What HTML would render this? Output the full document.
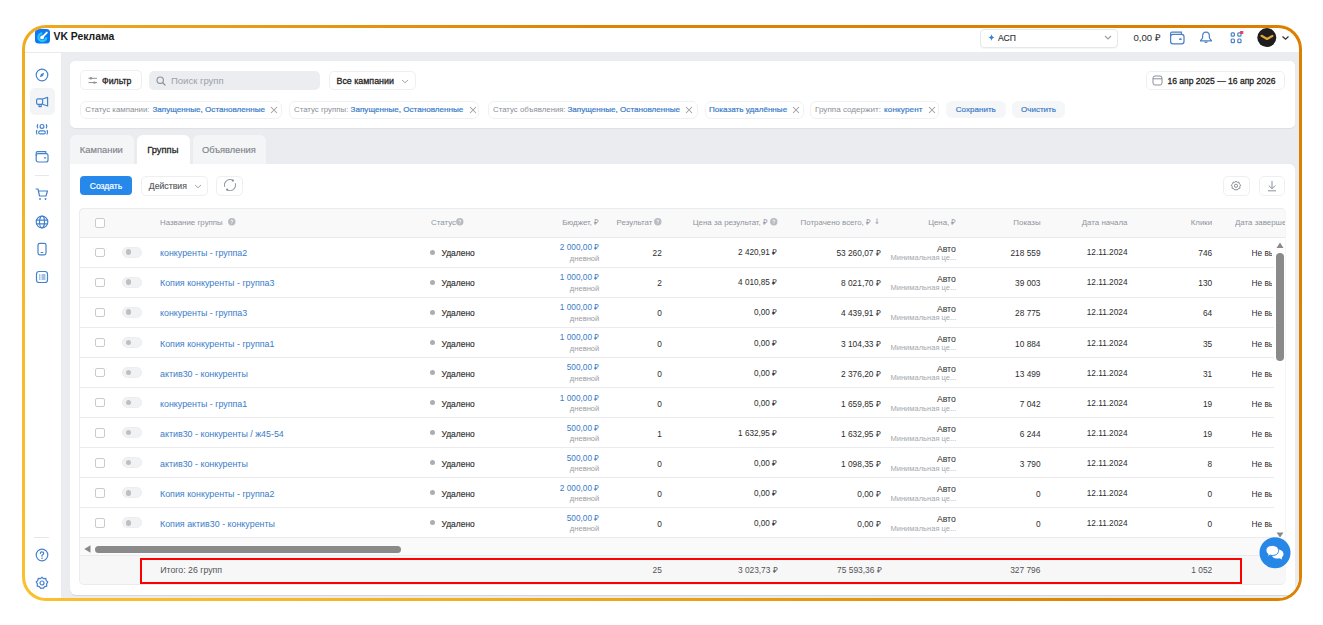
<!DOCTYPE html>
<html><head><meta charset="utf-8"><title>VK Реклама</title>
<style>
*{box-sizing:border-box;margin:0;padding:0}
html,body{width:1323px;height:625px;overflow:hidden;background:#fff}
body{position:relative;font-family:"Liberation Sans",sans-serif;color:#2c2d2e}
.a{position:absolute}
.t{position:absolute;white-space:nowrap}
svg{display:block}
</style></head><body>
<div class="a" style="left:22px;top:25px;width:1280px;height:576px;border-radius:24px;background:linear-gradient(48deg,#fbc02e 0%,#f7b928 15%,#eda51b 33%,#de8400 61%,#dc7e00 100%)"></div>
<div class="a" id="win" style="left:0;top:0;width:1323px;height:625px;clip-path:inset(28px 24px 27px 25px round 21px);background:#fff">
<div class="a" style="left:61px;top:52px;width:1238px;height:546px;background:#ebecef"></div>
<div class="a" style="left:25px;top:52px;width:36px;height:1px;background:#e6e9ee"></div>
<svg class="a" style="left:35px;top:29px;" width="15" height="15" viewBox="0 0 15 15"><rect x="0" y="0" width="15" height="14.5" rx="3.5" fill="#0b78f5"/><path d="M7.3 4.3 A3.9 3.9 0 1 0 11.2 8.2" fill="none" stroke="#2ac6f0" stroke-width="2.3"/><path d="M7.2 8.3 L11.8 3.6" stroke="#fff" stroke-width="1.9" stroke-linecap="round"/><circle cx="7.1" cy="8.4" r="1.9" fill="#fff"/></svg>
<div class="t" style="left:53.5px;top:30.50px;font-size:10.4px;font-weight:700;color:#1a1a1a;line-height:12px;">VK Реклама</div>
<div class="a" style="left:980px;top:29px;width:138px;height:18.5px;border:1px solid #e7e8ea;border-radius:4px;background:#fff;box-shadow:0 1px 1px rgba(0,0,0,.04)"></div>
<svg class="a" style="left:988px;top:34px;" width="7" height="7" viewBox="0 0 7 7"><path d="M3.5 0 Q3.9 3.1 7 3.5 Q3.9 3.9 3.5 7 Q3.1 3.9 0 3.5 Q3.1 3.1 3.5 0Z" fill="#2d81e0"/></svg>
<div class="t" style="left:998px;top:31.60px;font-size:8.6px;font-weight:400;color:#333;line-height:12px;-webkit-text-stroke:0.14px #333;">АСП</div>
<svg class="a" style="left:1104px;top:35px;" width="8" height="5" viewBox="0 0 8 5"><path d="M1 1 L4 4 L7 1" fill="none" stroke="#9a9fa5" stroke-width="1.2"/></svg>
<div class="t" style="left:1133.5px;top:32.00px;font-size:9.6px;font-weight:400;color:#2c2d2e;line-height:12px;">0,00 ₽</div>
<svg class="a" style="left:1169px;top:31px;" width="17" height="14" viewBox="0 0 17 14"><rect x="1.6" y="3.3" width="13.4" height="9.6" rx="2.3" fill="none" stroke="#4a80c4" stroke-width="1.25"/><path d="M1.6 5 V2.6 Q1.6 1.2 3 1.2 H12.4 V3.3" fill="none" stroke="#4a80c4" stroke-width="1.2"/><rect x="10.2" y="7.3" width="2.4" height="1.6" rx=".5" fill="#4a80c4"/></svg>
<svg class="a" style="left:1199px;top:31px;" width="14" height="14" viewBox="0 0 14 14"><path d="M7 1.2 C4.6 1.2 3.6 3 3.6 5.2 V6.8 C3.6 7.8 2.2 8.6 1.6 9.4 V9.9 H12.4 V9.4 C11.8 8.6 10.4 7.8 10.4 6.8 V5.2 C10.4 3 9.4 1.2 7 1.2Z" fill="none" stroke="#4a80c4" stroke-width="1.2" stroke-linejoin="round"/><path d="M5.6 10.6 Q7 12.4 8.4 10.6" fill="none" stroke="#4a80c4" stroke-width="1.2"/></svg>
<svg class="a" style="left:1229px;top:31px;" width="16" height="14" viewBox="0 0 16 14"><rect x="2.2" y="1.9" width="3.2" height="3.2" rx=".9" fill="none" stroke="#4a80c4" stroke-width="1.2"/><rect x="8.8" y="1.9" width="3.2" height="3.2" rx=".9" fill="none" stroke="#4a80c4" stroke-width="1.2"/><rect x="2.2" y="8" width="3.2" height="3.6" rx=".9" fill="none" stroke="#4a80c4" stroke-width="1.2"/><rect x="8.8" y="8" width="3.2" height="3.6" rx=".9" fill="none" stroke="#4a80c4" stroke-width="1.2"/><rect x="11" y="0" width="3.3" height="3.1" rx=".6" fill="#e2456e"/></svg>
<svg class="a" style="left:1257px;top:28px;" width="20" height="20" viewBox="0 0 20 20"><circle cx="9.8" cy="9.6" r="9.5" fill="#1e1e1e"/><path d="M4.6 7.8 L10 11 L15.4 8" fill="none" stroke="#e4a536" stroke-width="2.2" stroke-linecap="round" stroke-linejoin="round"/></svg>
<svg class="a" style="left:1281px;top:35px;" width="9" height="6" viewBox="0 0 9 6"><path d="M1.5 1.5 L4.5 4.2 L7.5 1.5" fill="none" stroke="#333" stroke-width="1.3"/></svg>
<div class="a" style="left:29.5px;top:87.5px;width:25.5px;height:27px;background:#f3f4f6;border-radius:5px"></div>
<svg class="a" style="left:35px;top:67.6px;" width="14" height="14" viewBox="0 0 14 14"><circle cx="7" cy="7" r="5.8" fill="none" stroke="#4682cc" stroke-width="1.2" stroke-linecap="round" stroke-linejoin="round"/><path d="M9.2 4.8 L8 8 L4.8 9.2 L6 6Z" fill="#4682cc"/></svg>
<svg class="a" style="left:35px;top:94.5px;" width="14" height="14" viewBox="0 0 14 14"><rect x="1.6" y="3.9" width="6" height="5.4" rx="1.4" fill="none" stroke="#4682cc" stroke-width="1.2" stroke-linecap="round" stroke-linejoin="round"/><path d="M7.6 4 L12.6 2.4 V11 L7.6 9.3" fill="none" stroke="#4682cc" stroke-width="1.2" stroke-linecap="round" stroke-linejoin="round"/><path d="M4 9.4 V11.6 H6.2 V9.4" fill="none" stroke="#4682cc" stroke-width="1.2" stroke-linecap="round" stroke-linejoin="round"/></svg>
<svg class="a" style="left:35px;top:121.69999999999999px;" width="14" height="14" viewBox="0 0 14 14"><circle cx="7" cy="4.4" r="1.9" fill="none" stroke="#4682cc" stroke-width="1.2" stroke-linecap="round" stroke-linejoin="round"/><rect x="3.7" y="8.9" width="6.6" height="3" rx="1.5" fill="none" stroke="#4682cc" stroke-width="1.2" stroke-linecap="round" stroke-linejoin="round"/><path d="M2.7 2.6 Q1.6 4.2 2.7 5.9" fill="none" stroke="#4682cc" stroke-width="1.2" stroke-linecap="round" stroke-linejoin="round"/><path d="M11.3 2.6 Q12.4 4.2 11.3 5.9" fill="none" stroke="#4682cc" stroke-width="1.2" stroke-linecap="round" stroke-linejoin="round"/><path d="M1.9 8.4 Q.9 10.2 1.9 12" fill="none" stroke="#4682cc" stroke-width="1.2" stroke-linecap="round" stroke-linejoin="round"/><path d="M12.1 8.4 Q13.1 10.2 12.1 12" fill="none" stroke="#4682cc" stroke-width="1.2" stroke-linecap="round" stroke-linejoin="round"/></svg>
<svg class="a" style="left:35px;top:150px;" width="14" height="14" viewBox="0 0 14 14"><rect x="1.2" y="3.6" width="11.8" height="8.4" rx="2" fill="none" stroke="#4682cc" stroke-width="1.2" stroke-linecap="round" stroke-linejoin="round"/><path d="M1.2 5.2 V3 Q1.2 1.7 2.5 1.7 H10.8 V3.6" fill="none" stroke="#4682cc" stroke-width="1.2" stroke-linecap="round" stroke-linejoin="round"/><path d="M9.4 7.8 H10.6" fill="none" stroke="#4682cc" stroke-width="1.2" stroke-linecap="round" stroke-linejoin="round"/></svg>
<div class="a" style="left:35px;top:175px;width:14px;height:1px;background:#e6e7ea"></div>
<svg class="a" style="left:35px;top:187px;" width="14" height="14" viewBox="0 0 14 14"><path d="M1 2 H3 L4.5 9 H11 L12.5 4 H3.5" fill="none" stroke="#4682cc" stroke-width="1.2" stroke-linecap="round" stroke-linejoin="round"/><circle cx="5" cy="12" r=".9" fill="#4682cc"/><circle cx="10.5" cy="12" r=".9" fill="#4682cc"/></svg>
<svg class="a" style="left:35px;top:215px;" width="14" height="14" viewBox="0 0 14 14"><circle cx="7" cy="7" r="5.8" fill="none" stroke="#4682cc" stroke-width="1.2" stroke-linecap="round" stroke-linejoin="round"/><ellipse cx="7" cy="7" rx="2.5" ry="5.8" fill="none" stroke="#4682cc" stroke-width="1.2" stroke-linecap="round" stroke-linejoin="round"/><path d="M1.5 5.2 H12.5 M1.5 8.8 H12.5" fill="none" stroke="#4682cc" stroke-width="1.2" stroke-linecap="round" stroke-linejoin="round"/></svg>
<svg class="a" style="left:35px;top:242px;" width="14" height="14" viewBox="0 0 14 14"><rect x="3" y="1.3" width="8" height="11.5" rx="1.8" fill="none" stroke="#4682cc" stroke-width="1.2" stroke-linecap="round" stroke-linejoin="round"/><path d="M6.2 10.5 H7.8" fill="none" stroke="#4682cc" stroke-width="1.2" stroke-linecap="round" stroke-linejoin="round"/></svg>
<svg class="a" style="left:35px;top:270px;" width="14" height="14" viewBox="0 0 14 14"><rect x="1.5" y="1.5" width="11" height="11" rx="2.5" fill="none" stroke="#4682cc" stroke-width="1.2" stroke-linecap="round" stroke-linejoin="round"/><path d="M4.5 5 H5 M7 5 H10 M4.5 7 H5 M7 7 H10 M4.5 9 H5 M7 9 H10" fill="none" stroke="#4682cc" stroke-width="1.2" stroke-linecap="round" stroke-linejoin="round"/></svg>
<div class="a" style="left:34px;top:537px;width:15px;height:1px;background:#e6e7ea"></div>
<svg class="a" style="left:35px;top:548.3px;" width="14" height="14" viewBox="0 0 14 14"><circle cx="7" cy="7" r="5.8" fill="none" stroke="#4682cc" stroke-width="1.2" stroke-linecap="round" stroke-linejoin="round"/><path d="M5.3 5.5 Q5.3 3.8 7 3.8 Q8.7 3.8 8.7 5.3 Q8.7 6.5 7 7.2 V8.2" fill="none" stroke="#4682cc" stroke-width="1.2" stroke-linecap="round" stroke-linejoin="round"/><circle cx="7" cy="10.2" r=".8" fill="#4682cc"/></svg>
<svg class="a" style="left:35px;top:576.3px;" width="14" height="14" viewBox="0 0 14 14"><path d="M7 1.2 L8.6 2.6 L10.8 2.4 L11.2 4.6 L12.8 6 L11.6 7.9 L11.8 10.1 L9.6 10.6 L8.3 12.4 L7 12 L5.7 12.4 L4.4 10.6 L2.2 10.1 L2.4 7.9 L1.2 6 L2.8 4.6 L3.2 2.4 L5.4 2.6Z" fill="none" stroke="#4682cc" stroke-width="1.2" stroke-linecap="round" stroke-linejoin="round"/><circle cx="7" cy="7" r="2" fill="none" stroke="#4682cc" stroke-width="1.2" stroke-linecap="round" stroke-linejoin="round"/></svg>
<div class="a" style="left:70px;top:60.5px;width:1225px;height:67.5px;background:#fff;border-radius:5px;box-shadow:0 1px 1px rgba(0,0,0,.05)"></div>
<div class="a" style="left:79.5px;top:70px;width:62px;height:20px;border:1px solid #eeeff1;border-radius:5px;background:#fff"></div>
<svg class="a" style="left:88px;top:76px;" width="10" height="9" viewBox="0 0 10 9"><path d="M0.5 2.3 H9 M0.5 6.6 H9" stroke="#8c9197" stroke-width="1"/><circle cx="2.9" cy="2.3" r="1.2" fill="#8c9197"/><circle cx="6.4" cy="6.6" r="1.2" fill="#8c9197"/></svg>
<div class="t" style="left:102px;top:74.50px;font-size:8.75px;font-weight:400;color:#222;line-height:12px;-webkit-text-stroke:0.28px #222;">Фильтр</div>
<div class="a" style="left:149px;top:70.5px;width:171px;height:19px;background:#ecedf0;border-radius:5px"></div>
<svg class="a" style="left:155.5px;top:75.5px;" width="10" height="10" viewBox="0 0 10 10"><circle cx="4.2" cy="4.2" r="3.2" fill="none" stroke="#8a9099" stroke-width="1.1"/><path d="M6.6 6.6 L9 9" stroke="#8a9099" stroke-width="1.2" stroke-linecap="round"/></svg>
<div class="t" style="left:171px;top:74.50px;font-size:9.5px;font-weight:400;color:#9aa0a8;line-height:12px;">Поиск групп</div>
<div class="a" style="left:328.5px;top:70.5px;width:87px;height:19px;border:1px solid #eeeff1;border-radius:5px;background:#fff"></div>
<div class="t" style="left:336.5px;top:74.50px;font-size:8.89px;font-weight:400;color:#222;line-height:12px;-webkit-text-stroke:0.28px #222;">Все кампании</div>
<svg class="a" style="left:401px;top:78.5px;" width="8" height="5" viewBox="0 0 8 5"><path d="M1 1 L4 3.8 L7 1" fill="none" stroke="#a3a8ae" stroke-width="1"/></svg>
<div class="a" style="left:1145.5px;top:70.5px;width:139px;height:19px;border:1px solid #eeeff1;border-radius:5px;background:#fff"></div>
<svg class="a" style="left:1152px;top:75px;" width="11" height="11" viewBox="0 0 11 11"><rect x="1" y="1" width="9" height="9" rx="2" fill="none" stroke="#8a9099" stroke-width="1"/><path d="M1 3.8 H10" stroke="#8a9099" stroke-width="1"/></svg>
<div class="t" style="left:1167.5px;top:74.50px;font-size:8.54px;font-weight:400;color:#222;line-height:12px;-webkit-text-stroke:0.28px #222;">16 апр 2025 — 16 апр 2026</div>
<div class="a" style="left:79.5px;top:100.5px;width:202.5px;height:18px;border:1px solid #f0f1f3;border-radius:6px;background:#fff"></div>
<div class="t" style="left:85.3px;top:103.50px;font-size:7.85px;font-weight:400;color:#8a8f96;line-height:12px;">Статус кампании:</div>
<div class="t" style="left:152.4px;top:103.50px;font-size:8.1px;font-weight:400;color:#3a7cc9;line-height:12px;-webkit-text-stroke:0.2px #3a7cc9;">Запущенные, Остановленные</div>
<svg class="a" style="left:269.8px;top:106px;" width="8" height="8" viewBox="0 0 8 8"><path d="M1 1 L7 7 M7 1 L1 7" stroke="#9ba0a6" stroke-width="1.05"/></svg>
<div class="a" style="left:288.7px;top:100.5px;width:190.5px;height:18px;border:1px solid #f0f1f3;border-radius:6px;background:#fff"></div>
<div class="t" style="left:294px;top:103.50px;font-size:7.85px;font-weight:400;color:#8a8f96;line-height:12px;">Статус группы:</div>
<div class="t" style="left:350.6px;top:103.50px;font-size:8.1px;font-weight:400;color:#3a7cc9;line-height:12px;-webkit-text-stroke:0.2px #3a7cc9;">Запущенные, Остановленные</div>
<svg class="a" style="left:468.8px;top:106px;" width="8" height="8" viewBox="0 0 8 8"><path d="M1 1 L7 7 M7 1 L1 7" stroke="#9ba0a6" stroke-width="1.05"/></svg>
<div class="a" style="left:487.5px;top:100.5px;width:210.5px;height:18px;border:1px solid #f0f1f3;border-radius:6px;background:#fff"></div>
<div class="t" style="left:493px;top:103.50px;font-size:7.85px;font-weight:400;color:#8a8f96;line-height:12px;">Статус объявления:</div>
<div class="t" style="left:567.4px;top:103.50px;font-size:8.1px;font-weight:400;color:#3a7cc9;line-height:12px;-webkit-text-stroke:0.2px #3a7cc9;">Запущенные, Остановленные</div>
<svg class="a" style="left:685.3px;top:106px;" width="8" height="8" viewBox="0 0 8 8"><path d="M1 1 L7 7 M7 1 L1 7" stroke="#9ba0a6" stroke-width="1.05"/></svg>
<div class="a" style="left:704.5px;top:100.5px;width:99.89999999999998px;height:18px;border:1px solid #f0f1f3;border-radius:6px;background:#fff"></div>
<div class="t" style="left:709px;top:103.50px;font-size:8.1px;font-weight:400;color:#3a7cc9;line-height:12px;-webkit-text-stroke:0.2px #3a7cc9;">Показать удалённые</div>
<svg class="a" style="left:792.3px;top:106px;" width="8" height="8" viewBox="0 0 8 8"><path d="M1 1 L7 7 M7 1 L1 7" stroke="#9ba0a6" stroke-width="1.05"/></svg>
<div class="a" style="left:809.8px;top:100.5px;width:129.60000000000002px;height:18px;border:1px solid #f0f1f3;border-radius:6px;background:#fff"></div>
<div class="t" style="left:815px;top:103.50px;font-size:8.1px;font-weight:400;color:#8a8f96;line-height:12px;">Группа содержит:</div>
<div class="t" style="left:884px;top:103.50px;font-size:8.1px;font-weight:400;color:#3a7cc9;line-height:12px;-webkit-text-stroke:0.2px #3a7cc9;letter-spacing:.15px;">конкурент</div>
<svg class="a" style="left:927.5999999999999px;top:106px;" width="8" height="8" viewBox="0 0 8 8"><path d="M1 1 L7 7 M7 1 L1 7" stroke="#9ba0a6" stroke-width="1.05"/></svg>
<div class="a" style="left:946.3px;top:100.6px;width:59.3px;height:17px;background:#f5f6f8;border-radius:6px"></div>
<div class="t" style="left:955.8px;top:103.50px;font-size:8.05px;font-weight:400;color:#3a7cc9;line-height:12px;-webkit-text-stroke:0.2px #3a7cc9;">Сохранить</div>
<div class="a" style="left:1012.2px;top:100.6px;width:53.2px;height:17px;background:#f5f6f8;border-radius:6px"></div>
<div class="t" style="left:1021px;top:103.50px;font-size:8.04px;font-weight:400;color:#3a7cc9;line-height:12px;-webkit-text-stroke:0.2px #3a7cc9;">Очистить</div>
<div class="a" style="left:70px;top:134.5px;width:64px;height:30px;background:#f4f5f7;border-radius:6px 6px 0 0"></div>
<div class="a" style="left:137.4px;top:134.5px;width:52.6px;height:30px;background:#fff;border-radius:6px 6px 0 0"></div>
<div class="a" style="left:193px;top:134.5px;width:73.3px;height:30px;background:#f4f5f7;border-radius:6px 6px 0 0"></div>
<div class="t" style="left:79.8px;top:143.60px;font-size:9.4px;font-weight:400;color:#7d8389;line-height:12px;-webkit-text-stroke:0.14px #7d8389;">Кампании</div>
<div class="t" style="left:147.2px;top:143.60px;font-size:9.4px;font-weight:400;color:#1f1f1f;line-height:12px;-webkit-text-stroke:0.28px #1f1f1f;">Группы</div>
<div class="t" style="left:202px;top:143.60px;font-size:9.3px;font-weight:400;color:#7d8389;line-height:12px;-webkit-text-stroke:0.14px #7d8389;">Объявления</div>
<div class="a" style="left:70px;top:164px;width:1225px;height:431px;background:#fff;border-radius:0 6px 6px 6px;box-shadow:0 1px 0 #d6d7d9"></div>
<div class="a" style="left:80px;top:176px;width:52px;height:19px;background:#2688eb;border-radius:4px"></div>
<div class="t" style="left:89.8px;top:179.50px;font-size:8.5px;font-weight:400;color:#fff;line-height:12px;-webkit-text-stroke:0.2px #fff;">Создать</div>
<div class="a" style="left:140.7px;top:176px;width:67.3px;height:19.5px;border:1px solid #eeeff1;border-radius:5px"></div>
<div class="t" style="left:148.8px;top:179.70px;font-size:8.7px;font-weight:400;color:#55595e;line-height:12px;-webkit-text-stroke:0.14px #55595e;">Действия</div>
<svg class="a" style="left:193.5px;top:183.5px;" width="8" height="5" viewBox="0 0 8 5"><path d="M1 1 L4 3.8 L7 1" fill="none" stroke="#a3a8ae" stroke-width="1"/></svg>
<div class="a" style="left:216.4px;top:176px;width:26.6px;height:19.5px;border:1px solid #eeeff1;border-radius:5px"></div>
<svg class="a" style="left:223.5px;top:179px;" width="12" height="12" viewBox="0 0 12 12"><path d="M8.75 1.34 A5.5 5.5 0 0 0 0.8 7.9" fill="none" stroke="#9a9ea4" stroke-width="1.1"/><path d="M3.25 10.86 A5.5 5.5 0 0 0 11.2 4.3" fill="none" stroke="#9a9ea4" stroke-width="1.1"/><circle cx="8.9" cy="1.6" r="1.1" fill="#8a8e94"/><circle cx="3.1" cy="10.6" r="1.1" fill="#8a8e94"/></svg>
<div class="a" style="left:1223px;top:175.5px;width:26.6px;height:20.3px;border:1px solid #eeeff1;border-radius:5px"></div>
<svg class="a" style="left:1230.3px;top:179.7px;" width="12" height="12" viewBox="0 0 12 12"><path d="M6 1.2 L7.3 2.3 L9 2.2 L9.3 3.9 L10.7 5 L9.8 6.5 L10 8.2 L8.3 8.6 L7.3 10 L6 9.6 L4.7 10 L3.7 8.6 L2 8.2 L2.2 6.5 L1.3 5 L2.7 3.9 L3 2.2 L4.7 2.3Z" fill="none" stroke="#8a9099" stroke-width="1"/><circle cx="6" cy="5.8" r="1.6" fill="none" stroke="#8a9099" stroke-width="1"/></svg>
<div class="a" style="left:1258.5px;top:175.5px;width:26.1px;height:20.3px;border:1px solid #eeeff1;border-radius:5px"></div>
<svg class="a" style="left:1265.5px;top:179.5px;" width="12" height="12" viewBox="0 0 12 12"><path d="M6 1 V8.5 M2.8 5.5 L6 8.7 L9.2 5.5 M2 10.8 H10" fill="none" stroke="#8a9099" stroke-width="1"/></svg>
<div class="a" style="left:79px;top:207.5px;width:1206.5px;height:30px;background:#f9f9fa;border:1px solid #eeeff1;border-right-color:#f6f6f7;border-bottom-color:#e9eaec;border-radius:5px 5px 0 0"></div>
<div class="a" style="left:95px;top:218.0px;width:10px;height:9.8px;border:1px solid #c9cccf;border-radius:2px;background:#fff"></div>
<div class="t" style="left:160px;top:216.80px;font-size:7.9px;font-weight:400;color:#8f949a;line-height:12px;">Название группы</div>
<svg class="a" style="left:227.6px;top:217.7px;" width="8" height="8" viewBox="0 0 8 8"><circle cx="3.8" cy="3.8" r="3.7" fill="#b8bcc1"/><path d="M2.8 3.1 Q2.8 2.1 3.8 2.1 Q4.8 2.1 4.8 3 Q4.8 3.6 3.8 4 V4.5" fill="none" stroke="#fff" stroke-width=".8"/><circle cx="3.8" cy="5.6" r=".45" fill="#fff"/></svg>
<div class="t" style="left:431px;top:216.80px;font-size:7.9px;font-weight:400;color:#8f949a;line-height:12px;">Статус</div>
<svg class="a" style="left:456.2px;top:217.7px;" width="8" height="8" viewBox="0 0 8 8"><circle cx="3.8" cy="3.8" r="3.7" fill="#b8bcc1"/><path d="M2.8 3.1 Q2.8 2.1 3.8 2.1 Q4.8 2.1 4.8 3 Q4.8 3.6 3.8 4 V4.5" fill="none" stroke="#fff" stroke-width=".8"/><circle cx="3.8" cy="5.6" r=".45" fill="#fff"/></svg>
<div class="t" style="right:723.8px;top:216.80px;font-size:7.9px;font-weight:400;color:#8f949a;line-height:12px;">Бюджет, ₽</div>
<div class="t" style="right:670.6px;top:216.80px;font-size:7.9px;font-weight:400;color:#8f949a;line-height:12px;">Результат</div>
<svg class="a" style="left:654.4000000000001px;top:217.7px;" width="8" height="8" viewBox="0 0 8 8"><circle cx="3.8" cy="3.8" r="3.7" fill="#b8bcc1"/><path d="M2.8 3.1 Q2.8 2.1 3.8 2.1 Q4.8 2.1 4.8 3 Q4.8 3.6 3.8 4 V4.5" fill="none" stroke="#fff" stroke-width=".8"/><circle cx="3.8" cy="5.6" r=".45" fill="#fff"/></svg>
<div class="t" style="right:555px;top:216.80px;font-size:7.9px;font-weight:400;color:#8f949a;line-height:12px;">Цена за результат, ₽</div>
<svg class="a" style="left:770.0px;top:217.7px;" width="8" height="8" viewBox="0 0 8 8"><circle cx="3.8" cy="3.8" r="3.7" fill="#b8bcc1"/><path d="M2.8 3.1 Q2.8 2.1 3.8 2.1 Q4.8 2.1 4.8 3 Q4.8 3.6 3.8 4 V4.5" fill="none" stroke="#fff" stroke-width=".8"/><circle cx="3.8" cy="5.6" r=".45" fill="#fff"/></svg>
<div class="t" style="right:452px;top:216.80px;font-size:7.9px;font-weight:400;color:#8f949a;line-height:12px;">Потрачено всего, ₽</div>
<svg class="a" style="left:874.5px;top:218.3px;" width="4" height="7" viewBox="0 0 4 7"><path d="M2 .5 V5.5 M.8 4.2 L2 5.6 L3.2 4.2" fill="none" stroke="#8f949a" stroke-width=".8"/></svg>
<div class="t" style="right:366.5px;top:216.80px;font-size:7.9px;font-weight:400;color:#8f949a;line-height:12px;">Цена, ₽</div>
<div class="t" style="right:282.4000000000001px;top:216.80px;font-size:7.9px;font-weight:400;color:#8f949a;line-height:12px;">Показы</div>
<div class="t" style="right:195.5px;top:216.80px;font-size:7.9px;font-weight:400;color:#8f949a;line-height:12px;">Дата начала</div>
<div class="t" style="right:110.79999999999995px;top:216.80px;font-size:7.9px;font-weight:400;color:#8f949a;line-height:12px;">Клики</div>
<div class="a" style="left:1235px;top:216px;width:50px;height:14px;overflow:hidden">
<div class="t" style="left:0;top:0.8px;font-size:7.9px;color:#8f949a;line-height:12px">Дата завершения</div></div>
<div class="a" style="left:79px;top:266.8px;width:1194.6px;height:1px;background:#ebebed"></div>
<div class="a" style="left:95px;top:247.5px;width:10px;height:9.8px;border:1px solid #c9cccf;border-radius:2px;background:#fff"></div>
<div class="a" style="left:122px;top:246.5px;width:19.5px;height:11.5px;background:#f1f2f4;border-radius:6px;border:1px solid #ecedef"></div>
<div class="a" style="left:125.6px;top:249.40px;width:5.8px;height:5.8px;border-radius:50%;background:#bdbfc3"></div>
<div class="t" style="left:160px;top:247.40px;font-size:8.9px;font-weight:400;color:#3a7cc9;line-height:12px;">конкуренты - группа2</div>
<div class="a" style="left:430.2px;top:249.70px;width:5.2px;height:5.2px;border-radius:50%;background:#aaadb1"></div>
<div class="t" style="left:441.5px;top:247.40px;font-size:8.44px;font-weight:400;color:#2c2d2e;line-height:12px;-webkit-text-stroke:0.14px #2c2d2e;">Удалено</div>
<div class="t" style="right:723.7px;top:242.30px;font-size:8.27px;font-weight:400;color:#3a7cc9;line-height:12px;">2 000,00 ₽</div>
<div class="t" style="right:723.7px;top:253.00px;font-size:7.58px;font-weight:400;color:#9a9ea3;line-height:12px;">дневной</div>
<div class="t" style="right:661.2px;top:247.40px;font-size:8.3px;font-weight:400;color:#2c2d2e;line-height:12px;">22</div>
<div class="t" style="right:545.8px;top:247.40px;font-size:8.2px;font-weight:400;color:#2c2d2e;line-height:12px;">2 420,91 ₽</div>
<div class="t" style="right:442.20000000000005px;top:247.40px;font-size:8.35px;font-weight:400;color:#2c2d2e;line-height:12px;">53 260,07 ₽</div>
<div class="t" style="right:367.20000000000005px;top:242.80px;font-size:8.7px;font-weight:400;color:#2c2d2e;line-height:12px;">Авто</div>
<div class="t" style="right:366.70000000000005px;top:252.30px;font-size:7.56px;font-weight:400;color:#a5a9ae;line-height:12px;">Минимальная це...</div>
<div class="t" style="right:282.5px;top:247.40px;font-size:8.3px;font-weight:400;color:#2c2d2e;line-height:12px;">218 559</div>
<div class="t" style="right:195.5px;top:247.40px;font-size:8.27px;font-weight:400;color:#2c2d2e;line-height:12px;">12.11.2024</div>
<div class="t" style="right:110.79999999999995px;top:247.40px;font-size:8.3px;font-weight:400;color:#2c2d2e;line-height:12px;">746</div>
<div class="a" style="left:1251.5px;top:246.40px;width:20.5px;height:14px;overflow:hidden">
<div class="t" style="left:0;top:1px;font-size:8.3px;color:#2c2d2e;line-height:12px">Не выбрана</div></div>
<div class="a" style="left:79px;top:296.84000000000003px;width:1194.6px;height:1px;background:#ebebed"></div>
<div class="a" style="left:95px;top:277.54px;width:10px;height:9.8px;border:1px solid #c9cccf;border-radius:2px;background:#fff"></div>
<div class="a" style="left:122px;top:276.54px;width:19.5px;height:11.5px;background:#f1f2f4;border-radius:6px;border:1px solid #ecedef"></div>
<div class="a" style="left:125.6px;top:279.44px;width:5.8px;height:5.8px;border-radius:50%;background:#bdbfc3"></div>
<div class="t" style="left:160px;top:277.44px;font-size:8.9px;font-weight:400;color:#3a7cc9;line-height:12px;">Копия конкуренты - группа3</div>
<div class="a" style="left:430.2px;top:279.74px;width:5.2px;height:5.2px;border-radius:50%;background:#aaadb1"></div>
<div class="t" style="left:441.5px;top:277.44px;font-size:8.44px;font-weight:400;color:#2c2d2e;line-height:12px;-webkit-text-stroke:0.14px #2c2d2e;">Удалено</div>
<div class="t" style="right:723.7px;top:272.34px;font-size:8.27px;font-weight:400;color:#3a7cc9;line-height:12px;">1 000,00 ₽</div>
<div class="t" style="right:723.7px;top:283.04px;font-size:7.58px;font-weight:400;color:#9a9ea3;line-height:12px;">дневной</div>
<div class="t" style="right:661.2px;top:277.44px;font-size:8.3px;font-weight:400;color:#2c2d2e;line-height:12px;">2</div>
<div class="t" style="right:545.8px;top:277.44px;font-size:8.2px;font-weight:400;color:#2c2d2e;line-height:12px;">4 010,85 ₽</div>
<div class="t" style="right:442.20000000000005px;top:277.44px;font-size:8.35px;font-weight:400;color:#2c2d2e;line-height:12px;">8 021,70 ₽</div>
<div class="t" style="right:367.20000000000005px;top:272.84px;font-size:8.7px;font-weight:400;color:#2c2d2e;line-height:12px;">Авто</div>
<div class="t" style="right:366.70000000000005px;top:282.34px;font-size:7.56px;font-weight:400;color:#a5a9ae;line-height:12px;">Минимальная це...</div>
<div class="t" style="right:282.5px;top:277.44px;font-size:8.3px;font-weight:400;color:#2c2d2e;line-height:12px;">39 003</div>
<div class="t" style="right:195.5px;top:277.44px;font-size:8.27px;font-weight:400;color:#2c2d2e;line-height:12px;">12.11.2024</div>
<div class="t" style="right:110.79999999999995px;top:277.44px;font-size:8.3px;font-weight:400;color:#2c2d2e;line-height:12px;">130</div>
<div class="a" style="left:1251.5px;top:276.44px;width:20.5px;height:14px;overflow:hidden">
<div class="t" style="left:0;top:1px;font-size:8.3px;color:#2c2d2e;line-height:12px">Не выбрана</div></div>
<div class="a" style="left:79px;top:326.88px;width:1194.6px;height:1px;background:#ebebed"></div>
<div class="a" style="left:95px;top:307.58px;width:10px;height:9.8px;border:1px solid #c9cccf;border-radius:2px;background:#fff"></div>
<div class="a" style="left:122px;top:306.58px;width:19.5px;height:11.5px;background:#f1f2f4;border-radius:6px;border:1px solid #ecedef"></div>
<div class="a" style="left:125.6px;top:309.48px;width:5.8px;height:5.8px;border-radius:50%;background:#bdbfc3"></div>
<div class="t" style="left:160px;top:307.48px;font-size:8.9px;font-weight:400;color:#3a7cc9;line-height:12px;">конкуренты - группа3</div>
<div class="a" style="left:430.2px;top:309.78px;width:5.2px;height:5.2px;border-radius:50%;background:#aaadb1"></div>
<div class="t" style="left:441.5px;top:307.48px;font-size:8.44px;font-weight:400;color:#2c2d2e;line-height:12px;-webkit-text-stroke:0.14px #2c2d2e;">Удалено</div>
<div class="t" style="right:723.7px;top:302.38px;font-size:8.27px;font-weight:400;color:#3a7cc9;line-height:12px;">1 000,00 ₽</div>
<div class="t" style="right:723.7px;top:313.08px;font-size:7.58px;font-weight:400;color:#9a9ea3;line-height:12px;">дневной</div>
<div class="t" style="right:661.2px;top:307.48px;font-size:8.3px;font-weight:400;color:#2c2d2e;line-height:12px;">0</div>
<div class="t" style="right:545.8px;top:307.48px;font-size:8.2px;font-weight:400;color:#2c2d2e;line-height:12px;">0,00 ₽</div>
<div class="t" style="right:442.20000000000005px;top:307.48px;font-size:8.35px;font-weight:400;color:#2c2d2e;line-height:12px;">4 439,91 ₽</div>
<div class="t" style="right:367.20000000000005px;top:302.88px;font-size:8.7px;font-weight:400;color:#2c2d2e;line-height:12px;">Авто</div>
<div class="t" style="right:366.70000000000005px;top:312.38px;font-size:7.56px;font-weight:400;color:#a5a9ae;line-height:12px;">Минимальная це...</div>
<div class="t" style="right:282.5px;top:307.48px;font-size:8.3px;font-weight:400;color:#2c2d2e;line-height:12px;">28 775</div>
<div class="t" style="right:195.5px;top:307.48px;font-size:8.27px;font-weight:400;color:#2c2d2e;line-height:12px;">12.11.2024</div>
<div class="t" style="right:110.79999999999995px;top:307.48px;font-size:8.3px;font-weight:400;color:#2c2d2e;line-height:12px;">64</div>
<div class="a" style="left:1251.5px;top:306.48px;width:20.5px;height:14px;overflow:hidden">
<div class="t" style="left:0;top:1px;font-size:8.3px;color:#2c2d2e;line-height:12px">Не выбрана</div></div>
<div class="a" style="left:79px;top:356.92px;width:1194.6px;height:1px;background:#ebebed"></div>
<div class="a" style="left:95px;top:337.62px;width:10px;height:9.8px;border:1px solid #c9cccf;border-radius:2px;background:#fff"></div>
<div class="a" style="left:122px;top:336.62px;width:19.5px;height:11.5px;background:#f1f2f4;border-radius:6px;border:1px solid #ecedef"></div>
<div class="a" style="left:125.6px;top:339.52px;width:5.8px;height:5.8px;border-radius:50%;background:#bdbfc3"></div>
<div class="t" style="left:160px;top:337.52px;font-size:8.9px;font-weight:400;color:#3a7cc9;line-height:12px;">Копия конкуренты - группа1</div>
<div class="a" style="left:430.2px;top:339.82px;width:5.2px;height:5.2px;border-radius:50%;background:#aaadb1"></div>
<div class="t" style="left:441.5px;top:337.52px;font-size:8.44px;font-weight:400;color:#2c2d2e;line-height:12px;-webkit-text-stroke:0.14px #2c2d2e;">Удалено</div>
<div class="t" style="right:723.7px;top:332.42px;font-size:8.27px;font-weight:400;color:#3a7cc9;line-height:12px;">1 000,00 ₽</div>
<div class="t" style="right:723.7px;top:343.12px;font-size:7.58px;font-weight:400;color:#9a9ea3;line-height:12px;">дневной</div>
<div class="t" style="right:661.2px;top:337.52px;font-size:8.3px;font-weight:400;color:#2c2d2e;line-height:12px;">0</div>
<div class="t" style="right:545.8px;top:337.52px;font-size:8.2px;font-weight:400;color:#2c2d2e;line-height:12px;">0,00 ₽</div>
<div class="t" style="right:442.20000000000005px;top:337.52px;font-size:8.35px;font-weight:400;color:#2c2d2e;line-height:12px;">3 104,33 ₽</div>
<div class="t" style="right:367.20000000000005px;top:332.92px;font-size:8.7px;font-weight:400;color:#2c2d2e;line-height:12px;">Авто</div>
<div class="t" style="right:366.70000000000005px;top:342.42px;font-size:7.56px;font-weight:400;color:#a5a9ae;line-height:12px;">Минимальная це...</div>
<div class="t" style="right:282.5px;top:337.52px;font-size:8.3px;font-weight:400;color:#2c2d2e;line-height:12px;">10 884</div>
<div class="t" style="right:195.5px;top:337.52px;font-size:8.27px;font-weight:400;color:#2c2d2e;line-height:12px;">12.11.2024</div>
<div class="t" style="right:110.79999999999995px;top:337.52px;font-size:8.3px;font-weight:400;color:#2c2d2e;line-height:12px;">35</div>
<div class="a" style="left:1251.5px;top:336.52px;width:20.5px;height:14px;overflow:hidden">
<div class="t" style="left:0;top:1px;font-size:8.3px;color:#2c2d2e;line-height:12px">Не выбрана</div></div>
<div class="a" style="left:79px;top:386.96000000000004px;width:1194.6px;height:1px;background:#ebebed"></div>
<div class="a" style="left:95px;top:367.66px;width:10px;height:9.8px;border:1px solid #c9cccf;border-radius:2px;background:#fff"></div>
<div class="a" style="left:122px;top:366.66px;width:19.5px;height:11.5px;background:#f1f2f4;border-radius:6px;border:1px solid #ecedef"></div>
<div class="a" style="left:125.6px;top:369.56px;width:5.8px;height:5.8px;border-radius:50%;background:#bdbfc3"></div>
<div class="t" style="left:160px;top:367.56px;font-size:8.9px;font-weight:400;color:#3a7cc9;line-height:12px;">актив30 - конкуренты</div>
<div class="a" style="left:430.2px;top:369.86px;width:5.2px;height:5.2px;border-radius:50%;background:#aaadb1"></div>
<div class="t" style="left:441.5px;top:367.56px;font-size:8.44px;font-weight:400;color:#2c2d2e;line-height:12px;-webkit-text-stroke:0.14px #2c2d2e;">Удалено</div>
<div class="t" style="right:723.7px;top:362.46px;font-size:8.27px;font-weight:400;color:#3a7cc9;line-height:12px;">500,00 ₽</div>
<div class="t" style="right:723.7px;top:373.16px;font-size:7.58px;font-weight:400;color:#9a9ea3;line-height:12px;">дневной</div>
<div class="t" style="right:661.2px;top:367.56px;font-size:8.3px;font-weight:400;color:#2c2d2e;line-height:12px;">0</div>
<div class="t" style="right:545.8px;top:367.56px;font-size:8.2px;font-weight:400;color:#2c2d2e;line-height:12px;">0,00 ₽</div>
<div class="t" style="right:442.20000000000005px;top:367.56px;font-size:8.35px;font-weight:400;color:#2c2d2e;line-height:12px;">2 376,20 ₽</div>
<div class="t" style="right:367.20000000000005px;top:362.96px;font-size:8.7px;font-weight:400;color:#2c2d2e;line-height:12px;">Авто</div>
<div class="t" style="right:366.70000000000005px;top:372.46px;font-size:7.56px;font-weight:400;color:#a5a9ae;line-height:12px;">Минимальная це...</div>
<div class="t" style="right:282.5px;top:367.56px;font-size:8.3px;font-weight:400;color:#2c2d2e;line-height:12px;">13 499</div>
<div class="t" style="right:195.5px;top:367.56px;font-size:8.27px;font-weight:400;color:#2c2d2e;line-height:12px;">12.11.2024</div>
<div class="t" style="right:110.79999999999995px;top:367.56px;font-size:8.3px;font-weight:400;color:#2c2d2e;line-height:12px;">31</div>
<div class="a" style="left:1251.5px;top:366.56px;width:20.5px;height:14px;overflow:hidden">
<div class="t" style="left:0;top:1px;font-size:8.3px;color:#2c2d2e;line-height:12px">Не выбрана</div></div>
<div class="a" style="left:79px;top:417.0px;width:1194.6px;height:1px;background:#ebebed"></div>
<div class="a" style="left:95px;top:397.7px;width:10px;height:9.8px;border:1px solid #c9cccf;border-radius:2px;background:#fff"></div>
<div class="a" style="left:122px;top:396.7px;width:19.5px;height:11.5px;background:#f1f2f4;border-radius:6px;border:1px solid #ecedef"></div>
<div class="a" style="left:125.6px;top:399.60px;width:5.8px;height:5.8px;border-radius:50%;background:#bdbfc3"></div>
<div class="t" style="left:160px;top:397.60px;font-size:8.9px;font-weight:400;color:#3a7cc9;line-height:12px;">конкуренты - группа1</div>
<div class="a" style="left:430.2px;top:399.90px;width:5.2px;height:5.2px;border-radius:50%;background:#aaadb1"></div>
<div class="t" style="left:441.5px;top:397.60px;font-size:8.44px;font-weight:400;color:#2c2d2e;line-height:12px;-webkit-text-stroke:0.14px #2c2d2e;">Удалено</div>
<div class="t" style="right:723.7px;top:392.50px;font-size:8.27px;font-weight:400;color:#3a7cc9;line-height:12px;">1 000,00 ₽</div>
<div class="t" style="right:723.7px;top:403.20px;font-size:7.58px;font-weight:400;color:#9a9ea3;line-height:12px;">дневной</div>
<div class="t" style="right:661.2px;top:397.60px;font-size:8.3px;font-weight:400;color:#2c2d2e;line-height:12px;">0</div>
<div class="t" style="right:545.8px;top:397.60px;font-size:8.2px;font-weight:400;color:#2c2d2e;line-height:12px;">0,00 ₽</div>
<div class="t" style="right:442.20000000000005px;top:397.60px;font-size:8.35px;font-weight:400;color:#2c2d2e;line-height:12px;">1 659,85 ₽</div>
<div class="t" style="right:367.20000000000005px;top:393.00px;font-size:8.7px;font-weight:400;color:#2c2d2e;line-height:12px;">Авто</div>
<div class="t" style="right:366.70000000000005px;top:402.50px;font-size:7.56px;font-weight:400;color:#a5a9ae;line-height:12px;">Минимальная це...</div>
<div class="t" style="right:282.5px;top:397.60px;font-size:8.3px;font-weight:400;color:#2c2d2e;line-height:12px;">7 042</div>
<div class="t" style="right:195.5px;top:397.60px;font-size:8.27px;font-weight:400;color:#2c2d2e;line-height:12px;">12.11.2024</div>
<div class="t" style="right:110.79999999999995px;top:397.60px;font-size:8.3px;font-weight:400;color:#2c2d2e;line-height:12px;">19</div>
<div class="a" style="left:1251.5px;top:396.60px;width:20.5px;height:14px;overflow:hidden">
<div class="t" style="left:0;top:1px;font-size:8.3px;color:#2c2d2e;line-height:12px">Не выбрана</div></div>
<div class="a" style="left:79px;top:447.04px;width:1194.6px;height:1px;background:#ebebed"></div>
<div class="a" style="left:95px;top:427.74px;width:10px;height:9.8px;border:1px solid #c9cccf;border-radius:2px;background:#fff"></div>
<div class="a" style="left:122px;top:426.74px;width:19.5px;height:11.5px;background:#f1f2f4;border-radius:6px;border:1px solid #ecedef"></div>
<div class="a" style="left:125.6px;top:429.64px;width:5.8px;height:5.8px;border-radius:50%;background:#bdbfc3"></div>
<div class="t" style="left:160px;top:427.64px;font-size:8.9px;font-weight:400;color:#3a7cc9;line-height:12px;">актив30 - конкуренты / ж45-54</div>
<div class="a" style="left:430.2px;top:429.94px;width:5.2px;height:5.2px;border-radius:50%;background:#aaadb1"></div>
<div class="t" style="left:441.5px;top:427.64px;font-size:8.44px;font-weight:400;color:#2c2d2e;line-height:12px;-webkit-text-stroke:0.14px #2c2d2e;">Удалено</div>
<div class="t" style="right:723.7px;top:422.54px;font-size:8.27px;font-weight:400;color:#3a7cc9;line-height:12px;">500,00 ₽</div>
<div class="t" style="right:723.7px;top:433.24px;font-size:7.58px;font-weight:400;color:#9a9ea3;line-height:12px;">дневной</div>
<div class="t" style="right:661.2px;top:427.64px;font-size:8.3px;font-weight:400;color:#2c2d2e;line-height:12px;">1</div>
<div class="t" style="right:545.8px;top:427.64px;font-size:8.2px;font-weight:400;color:#2c2d2e;line-height:12px;">1 632,95 ₽</div>
<div class="t" style="right:442.20000000000005px;top:427.64px;font-size:8.35px;font-weight:400;color:#2c2d2e;line-height:12px;">1 632,95 ₽</div>
<div class="t" style="right:367.20000000000005px;top:423.04px;font-size:8.7px;font-weight:400;color:#2c2d2e;line-height:12px;">Авто</div>
<div class="t" style="right:366.70000000000005px;top:432.54px;font-size:7.56px;font-weight:400;color:#a5a9ae;line-height:12px;">Минимальная це...</div>
<div class="t" style="right:282.5px;top:427.64px;font-size:8.3px;font-weight:400;color:#2c2d2e;line-height:12px;">6 244</div>
<div class="t" style="right:195.5px;top:427.64px;font-size:8.27px;font-weight:400;color:#2c2d2e;line-height:12px;">12.11.2024</div>
<div class="t" style="right:110.79999999999995px;top:427.64px;font-size:8.3px;font-weight:400;color:#2c2d2e;line-height:12px;">19</div>
<div class="a" style="left:1251.5px;top:426.64px;width:20.5px;height:14px;overflow:hidden">
<div class="t" style="left:0;top:1px;font-size:8.3px;color:#2c2d2e;line-height:12px">Не выбрана</div></div>
<div class="a" style="left:79px;top:477.08000000000004px;width:1194.6px;height:1px;background:#ebebed"></div>
<div class="a" style="left:95px;top:457.78000000000003px;width:10px;height:9.8px;border:1px solid #c9cccf;border-radius:2px;background:#fff"></div>
<div class="a" style="left:122px;top:456.78000000000003px;width:19.5px;height:11.5px;background:#f1f2f4;border-radius:6px;border:1px solid #ecedef"></div>
<div class="a" style="left:125.6px;top:459.68px;width:5.8px;height:5.8px;border-radius:50%;background:#bdbfc3"></div>
<div class="t" style="left:160px;top:457.68px;font-size:8.9px;font-weight:400;color:#3a7cc9;line-height:12px;">актив30 - конкуренты</div>
<div class="a" style="left:430.2px;top:459.98px;width:5.2px;height:5.2px;border-radius:50%;background:#aaadb1"></div>
<div class="t" style="left:441.5px;top:457.68px;font-size:8.44px;font-weight:400;color:#2c2d2e;line-height:12px;-webkit-text-stroke:0.14px #2c2d2e;">Удалено</div>
<div class="t" style="right:723.7px;top:452.58px;font-size:8.27px;font-weight:400;color:#3a7cc9;line-height:12px;">500,00 ₽</div>
<div class="t" style="right:723.7px;top:463.28px;font-size:7.58px;font-weight:400;color:#9a9ea3;line-height:12px;">дневной</div>
<div class="t" style="right:661.2px;top:457.68px;font-size:8.3px;font-weight:400;color:#2c2d2e;line-height:12px;">0</div>
<div class="t" style="right:545.8px;top:457.68px;font-size:8.2px;font-weight:400;color:#2c2d2e;line-height:12px;">0,00 ₽</div>
<div class="t" style="right:442.20000000000005px;top:457.68px;font-size:8.35px;font-weight:400;color:#2c2d2e;line-height:12px;">1 098,35 ₽</div>
<div class="t" style="right:367.20000000000005px;top:453.08px;font-size:8.7px;font-weight:400;color:#2c2d2e;line-height:12px;">Авто</div>
<div class="t" style="right:366.70000000000005px;top:462.58px;font-size:7.56px;font-weight:400;color:#a5a9ae;line-height:12px;">Минимальная це...</div>
<div class="t" style="right:282.5px;top:457.68px;font-size:8.3px;font-weight:400;color:#2c2d2e;line-height:12px;">3 790</div>
<div class="t" style="right:195.5px;top:457.68px;font-size:8.27px;font-weight:400;color:#2c2d2e;line-height:12px;">12.11.2024</div>
<div class="t" style="right:110.79999999999995px;top:457.68px;font-size:8.3px;font-weight:400;color:#2c2d2e;line-height:12px;">8</div>
<div class="a" style="left:1251.5px;top:456.68px;width:20.5px;height:14px;overflow:hidden">
<div class="t" style="left:0;top:1px;font-size:8.3px;color:#2c2d2e;line-height:12px">Не выбрана</div></div>
<div class="a" style="left:79px;top:507.12px;width:1194.6px;height:1px;background:#ebebed"></div>
<div class="a" style="left:95px;top:487.82px;width:10px;height:9.8px;border:1px solid #c9cccf;border-radius:2px;background:#fff"></div>
<div class="a" style="left:122px;top:486.82px;width:19.5px;height:11.5px;background:#f1f2f4;border-radius:6px;border:1px solid #ecedef"></div>
<div class="a" style="left:125.6px;top:489.72px;width:5.8px;height:5.8px;border-radius:50%;background:#bdbfc3"></div>
<div class="t" style="left:160px;top:487.72px;font-size:8.9px;font-weight:400;color:#3a7cc9;line-height:12px;">Копия конкуренты - группа2</div>
<div class="a" style="left:430.2px;top:490.02px;width:5.2px;height:5.2px;border-radius:50%;background:#aaadb1"></div>
<div class="t" style="left:441.5px;top:487.72px;font-size:8.44px;font-weight:400;color:#2c2d2e;line-height:12px;-webkit-text-stroke:0.14px #2c2d2e;">Удалено</div>
<div class="t" style="right:723.7px;top:482.62px;font-size:8.27px;font-weight:400;color:#3a7cc9;line-height:12px;">2 000,00 ₽</div>
<div class="t" style="right:723.7px;top:493.32px;font-size:7.58px;font-weight:400;color:#9a9ea3;line-height:12px;">дневной</div>
<div class="t" style="right:661.2px;top:487.72px;font-size:8.3px;font-weight:400;color:#2c2d2e;line-height:12px;">0</div>
<div class="t" style="right:545.8px;top:487.72px;font-size:8.2px;font-weight:400;color:#2c2d2e;line-height:12px;">0,00 ₽</div>
<div class="t" style="right:442.20000000000005px;top:487.72px;font-size:8.35px;font-weight:400;color:#2c2d2e;line-height:12px;">0,00 ₽</div>
<div class="t" style="right:367.20000000000005px;top:483.12px;font-size:8.7px;font-weight:400;color:#2c2d2e;line-height:12px;">Авто</div>
<div class="t" style="right:366.70000000000005px;top:492.62px;font-size:7.56px;font-weight:400;color:#a5a9ae;line-height:12px;">Минимальная це...</div>
<div class="t" style="right:282.5px;top:487.72px;font-size:8.3px;font-weight:400;color:#2c2d2e;line-height:12px;">0</div>
<div class="t" style="right:195.5px;top:487.72px;font-size:8.27px;font-weight:400;color:#2c2d2e;line-height:12px;">12.11.2024</div>
<div class="t" style="right:110.79999999999995px;top:487.72px;font-size:8.3px;font-weight:400;color:#2c2d2e;line-height:12px;">0</div>
<div class="a" style="left:1251.5px;top:486.72px;width:20.5px;height:14px;overflow:hidden">
<div class="t" style="left:0;top:1px;font-size:8.3px;color:#2c2d2e;line-height:12px">Не выбрана</div></div>
<div class="a" style="left:79px;top:537.1600000000001px;width:1194.6px;height:1px;background:#ebebed"></div>
<div class="a" style="left:95px;top:517.8600000000001px;width:10px;height:9.8px;border:1px solid #c9cccf;border-radius:2px;background:#fff"></div>
<div class="a" style="left:122px;top:516.8600000000001px;width:19.5px;height:11.5px;background:#f1f2f4;border-radius:6px;border:1px solid #ecedef"></div>
<div class="a" style="left:125.6px;top:519.76px;width:5.8px;height:5.8px;border-radius:50%;background:#bdbfc3"></div>
<div class="t" style="left:160px;top:517.76px;font-size:8.9px;font-weight:400;color:#3a7cc9;line-height:12px;">Копия актив30 - конкуренты</div>
<div class="a" style="left:430.2px;top:520.06px;width:5.2px;height:5.2px;border-radius:50%;background:#aaadb1"></div>
<div class="t" style="left:441.5px;top:517.76px;font-size:8.44px;font-weight:400;color:#2c2d2e;line-height:12px;-webkit-text-stroke:0.14px #2c2d2e;">Удалено</div>
<div class="t" style="right:723.7px;top:512.66px;font-size:8.27px;font-weight:400;color:#3a7cc9;line-height:12px;">500,00 ₽</div>
<div class="t" style="right:723.7px;top:523.36px;font-size:7.58px;font-weight:400;color:#9a9ea3;line-height:12px;">дневной</div>
<div class="t" style="right:661.2px;top:517.76px;font-size:8.3px;font-weight:400;color:#2c2d2e;line-height:12px;">0</div>
<div class="t" style="right:545.8px;top:517.76px;font-size:8.2px;font-weight:400;color:#2c2d2e;line-height:12px;">0,00 ₽</div>
<div class="t" style="right:442.20000000000005px;top:517.76px;font-size:8.35px;font-weight:400;color:#2c2d2e;line-height:12px;">0,00 ₽</div>
<div class="t" style="right:367.20000000000005px;top:513.16px;font-size:8.7px;font-weight:400;color:#2c2d2e;line-height:12px;">Авто</div>
<div class="t" style="right:366.70000000000005px;top:522.66px;font-size:7.56px;font-weight:400;color:#a5a9ae;line-height:12px;">Минимальная це...</div>
<div class="t" style="right:282.5px;top:517.76px;font-size:8.3px;font-weight:400;color:#2c2d2e;line-height:12px;">0</div>
<div class="t" style="right:195.5px;top:517.76px;font-size:8.27px;font-weight:400;color:#2c2d2e;line-height:12px;">12.11.2024</div>
<div class="t" style="right:110.79999999999995px;top:517.76px;font-size:8.3px;font-weight:400;color:#2c2d2e;line-height:12px;">0</div>
<div class="a" style="left:1251.5px;top:516.76px;width:20.5px;height:14px;overflow:hidden">
<div class="t" style="left:0;top:1px;font-size:8.3px;color:#2c2d2e;line-height:12px">Не выбрана</div></div>
<svg class="a" style="left:1276px;top:241.5px;" width="8" height="7" viewBox="0 0 8 7"><path d="M4 .5 L7.5 6 H.5Z" fill="#8a8a8a"/></svg>
<div class="a" style="left:1276px;top:253px;width:7.5px;height:107.5px;background:#8a8a8a;border-radius:4px"></div>
<svg class="a" style="left:1276px;top:532px;" width="8" height="6" viewBox="0 0 8 6"><path d="M.5 .5 H7.5 L4 5.5Z" fill="#8a8a8a"/></svg>
<div class="a" style="left:80px;top:538px;width:1204.5px;height:17px;background:#fafafa"></div>
<div class="a" style="left:79px;top:555px;width:1206.5px;height:1px;background:#ebebed"></div>
<svg class="a" style="left:83.5px;top:544.8px;" width="7" height="8" viewBox="0 0 7 8"><path d="M6.5 .3 V7.7 L.3 4Z" fill="#8a8a8a"/></svg>
<div class="a" style="left:95px;top:546px;width:305.6px;height:7.3px;background:#8a8a8a;border-radius:4px"></div>
<div class="a" style="left:79.5px;top:555.5px;width:1205.8px;height:29px;background:#f7f7f8;border-radius:0 0 5px 5px"></div>
<div class="t" style="left:160.2px;top:563.80px;font-size:8.78px;font-weight:400;color:#505357;line-height:12px;">Итого: 26 групп</div>
<div class="t" style="right:661.2px;top:563.80px;font-size:8.3px;font-weight:400;color:#505357;line-height:12px;">25</div>
<div class="t" style="right:545.3px;top:563.80px;font-size:8.34px;font-weight:400;color:#505357;line-height:12px;">3 023,73 ₽</div>
<div class="t" style="right:441.29999999999995px;top:563.80px;font-size:8.4px;font-weight:400;color:#505357;line-height:12px;">75 593,36 ₽</div>
<div class="t" style="right:282.5999999999999px;top:563.80px;font-size:8.38px;font-weight:400;color:#505357;line-height:12px;">327 796</div>
<div class="t" style="right:110.79999999999995px;top:563.80px;font-size:8.38px;font-weight:400;color:#505357;line-height:12px;">1 052</div>
<div class="a" style="left:79px;top:207.5px;width:1206.5px;height:377.5px;border:1px solid #ebecee;border-right-color:#f6f6f7;border-radius:5px"></div>
<div class="a" style="left:140px;top:558px;width:1102px;height:26px;border:2px solid #f00"></div>
</div>
<svg class="a" style="left:1258.5px;top:536.5px;" width="32" height="32" viewBox="0 0 32 32"><circle cx="16" cy="15.8" r="15.5" fill="#2787e6"/><path d="M18.5 12.5 C23 12.5 24.5 15 24.5 17 C24.5 18.5 23.8 19.6 22.8 20.4 L23.2 22.6 L20.6 21.3 C19.9 21.5 19.2 21.6 18.5 21.6 C14 21.6 12.5 19 12.5 17 C12.5 15 14 12.5 18.5 12.5Z" fill="#fff"/><path d="M13.3 8.5 C17.8 8.5 19.6 11 19.6 13.5 C19.6 16 17.8 18.5 13.3 18.5 C12.6 18.5 11.9 18.4 11.3 18.2 L8.6 19.6 L9.1 17.2 C7.9 16.2 7 15 7 13.5 C7 11 8.8 8.5 13.3 8.5Z" fill="#fff" stroke="#2787e6" stroke-width="1"/></svg>
</body></html>
